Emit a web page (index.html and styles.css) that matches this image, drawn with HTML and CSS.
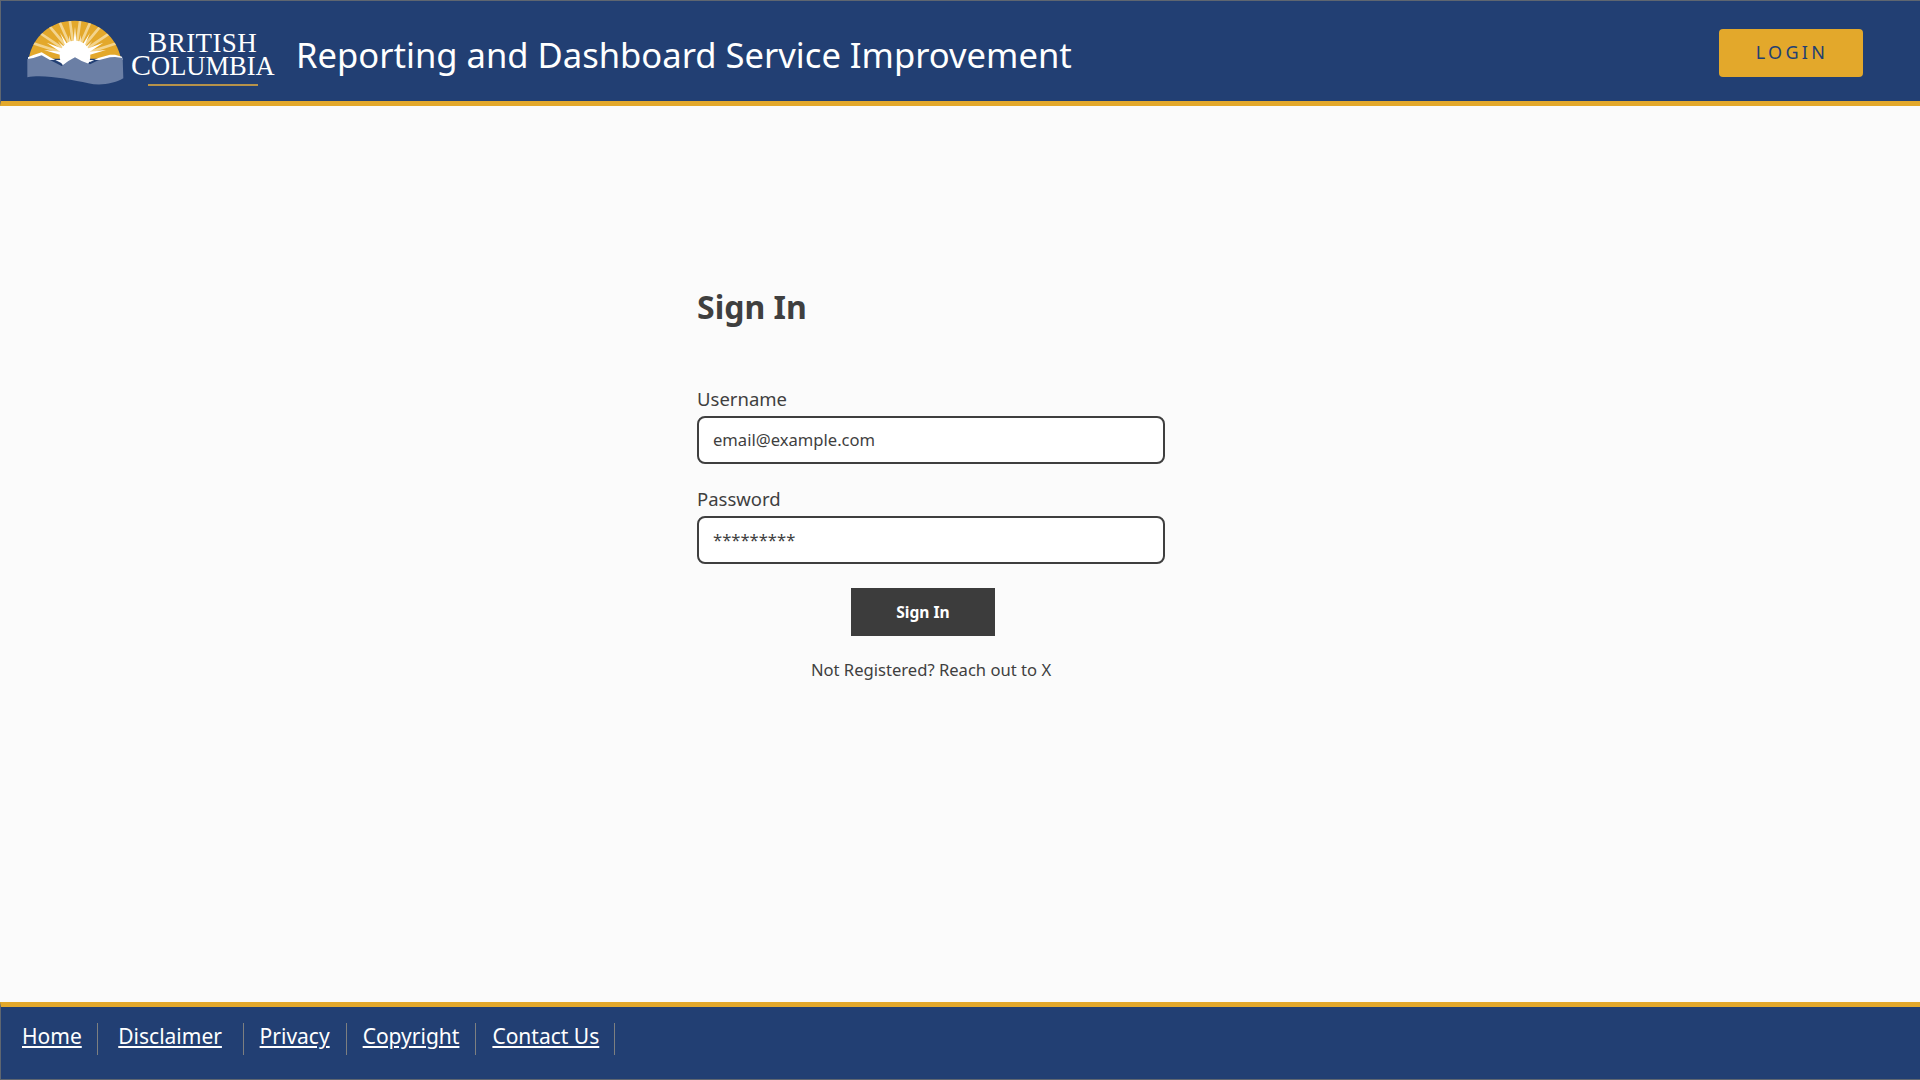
FILE: index.html
```html
<!DOCTYPE html>
<html lang="en">
<head>
  <meta charset="UTF-8" />
  <title>Reporting and Dashboard Service Improvement</title>
  <link rel="stylesheet" href="styles.css">
</head>
<body>

<header class="site-header">
  <a class="logo" href="#">
    <svg class="logo-mark" width="100" height="70" viewBox="78 54 300 210">
      <defs>
        <clipPath id="dome">
          <path d="M86 176 C98 110 150 62 224 62 C296 62 350 112 363 176 Z"/>
        </clipPath>
      </defs>
      <path d="M86 176 C98 110 150 62 224 62 C296 62 350 112 363 176 Z" fill="#e3a82b"/>
      <g clip-path="url(#dome)" stroke="#f3d48e" stroke-width="8" fill="none">
        <path d="M225 170 L249 2 M225 170 L201 2 M225 170 L294 15 M225 170 L156 15 M225 170 L334 40 M225 170 L116 40 M225 170 L366 75 M225 170 L84 75 M225 170 L387 118 M225 170 L63 118"/>
      </g>
      <g fill="#fff">
        <polygon points="225,80 217,170 233,170"/>
        <polygon points="243,105 225,170 238,170"/>
        <polygon points="207,105 225,170 212,170"/>
        <polygon points="270,98 225,170 240,170"/>
        <polygon points="180,98 225,170 210,170"/>
        <polygon points="277,123 225,170 240,170"/>
        <polygon points="173,123 225,170 210,170"/>
        <polygon points="310,128 225,160 240,175"/>
        <polygon points="140,128 225,160 210,175"/>
        <polygon points="318,150 225,160 235,175"/>
        <polygon points="132,150 225,160 215,175"/>
        <circle cx="225" cy="168" r="46"/>
      </g>
      <path d="M84 172 L100 165 L125 157 L150 172 L185 190 L205 176 L225 164 L245 176 L270 186 L295 174 L330 164 L345 164 L366 170 L368 180 L84 180 Z" fill="#fff"/>
      <path d="M82 177 L100 174 L125 166 L150 180 L185 198 L205 183 L225 172 L245 183 L270 193 L295 181 L330 172 L345 171 L368 174 L370 235 C340 252 300 258 265 250 C210 238 130 222 82 232 Z" fill="#6b7fa5"/>
    </svg>
    <span class="logo-text">
      <span class="logo-line logo-british"><span class="logo-cap">B</span>ritish</span>
      <span class="logo-line logo-columbia"><span class="logo-cap">C</span>olumbia</span>
      <span class="logo-rule"></span>
    </span>
  </a>
  <h1 class="site-title">Reporting and Dashboard Service Improvement</h1>
  <button class="login-btn">LOGIN</button>
</header>

<main class="content">
  <form class="signin-form">
    <h2>Sign In</h2>
    <div class="input-group">
      <label for="username">Username</label>
      <input type="text" id="username" placeholder="email@example.com" />
    </div>
    <div class="input-group">
      <label for="password">Password</label>
      <input type="text" id="password" placeholder="*********" />
    </div>
    <div class="button-row">
      <button type="button" class="signin-btn">Sign In</button>
    </div>
    <p class="register-note">Not Registered? Reach out to X</p>
  </form>
</main>

<footer class="site-footer">
  <ul class="footer-links">
    <li><a href="#">Home</a></li>
    <li><a href="#">Disclaimer</a></li>
    <li><a href="#">Privacy</a></li>
    <li><a href="#">Copyright</a></li>
    <li><a href="#">Contact Us</a></li>
  </ul>
</footer>

</body>
</html>
```

FILE: styles.css
```css
* {
  box-sizing: border-box;
}
body {
  margin: 0;
  height: 100vh;
  display: flex;
  flex-direction: column;
  font-family: "Noto Sans", sans-serif;
  background: #fbfbfb;
  color: #3f3f3f;
}
.site-header {
  height: 106px;
  display: flex;
  align-items: center;
  background: #223f73;
  border-top: 1px solid #5f6670;
  border-left: 1px solid #5f6670;
  border-bottom: 5px solid #e3a82b;
  padding: 0 57px 0 25px;
}
.logo {
  display: flex;
  align-items: center;
  text-decoration: none;
  color: #fff;
}
.logo-mark {
  display: block;
  margin-top: 4px;
}
.logo-text {
  display: flex;
  flex-direction: column;
  margin-left: 5px;
  margin-top: 14px;
  width: 144px;
  font-family: "Liberation Serif", serif;
  text-transform: uppercase;
  white-space: nowrap;
}
.logo-line {
  display: block;
  height: 25px;
  line-height: 25px;
}
.logo-british {
  font-size: 27px;
  padding-left: 17px;
  letter-spacing: 0.4px;
}
.logo-columbia {
  font-size: 26.5px;
  margin-top: -3px;
}
.logo-british .logo-cap {
  font-size: 29px;
}
.logo-columbia .logo-cap {
  font-size: 30px;
}
.logo-rule {
  display: block;
  width: 110px;
  height: 2px;
  margin: 7px 0 0 17px;
  background: #b6924a;
}
.site-title {
  margin: 7px 0 0 21px;
  font-size: 34.6px;
  font-weight: 400;
  color: #fff;
  flex: 1;
}
.login-btn {
  width: 144px;
  height: 48px;
  margin-top: 4px;
  padding: 0 0 2px 2px;
  background: #e3a82b;
  color: #223f73;
  border: none;
  border-radius: 4px;
  font-family: inherit;
  font-size: 18px;
  letter-spacing: 3.3px;
}
.content {
  flex: 1;
  padding-left: 697px;
}
.signin-form {
  width: 468px;
  padding-top: 179px;
}
h2 {
  margin: 0 0 58px 0;
  font-size: 32px;
  line-height: 44px;
  font-weight: 700;
}
.input-group {
  margin-bottom: 24px;
}
.input-group + .input-group {
  margin-top: -1px;
}
label {
  display: block;
  font-size: 18.5px;
  line-height: 24px;
  margin-bottom: 5px;
}
input {
  display: block;
  width: 100%;
  height: 48px;
  padding: 0 14px 2px;
  border: 2px solid #3f3f3f;
  border-radius: 8px;
  background: #fff;
  font-family: inherit;
  font-size: 16.6px;
  color: #3f3f3f;
}
input::placeholder {
  color: #3f3f3f;
  opacity: 1;
}
.button-row {
  padding-left: 154px;
}
.signin-btn {
  display: block;
  width: 144px;
  height: 48px;
  background: #3c3c3c;
  color: #fff;
  border: none;
  font-family: inherit;
  font-size: 15.6px;
  font-weight: 700;
}
.register-note {
  margin: 23px 0 0 0;
  font-size: 16.6px;
  line-height: 22px;
  text-align: center;
}
.site-footer {
  height: 78px;
  background: #223f73;
  border-top: 5px solid #e3a82b;
  border-left: 1px solid #5f6670;
  border-bottom: 1px solid #5f6670;
  padding: 16px 0 0 0;
}
.footer-links {
  display: flex;
  margin: 0;
  padding: 0;
  list-style: none;
}
.footer-links li {
  height: 32px;
  line-height: 26px;
  padding: 0 16px;
  border-right: 1px solid #7d7f80;
}
.footer-links li:first-child {
  padding-left: 21px;
  padding-right: 15.5px;
}
.footer-links li:nth-child(2) {
  padding-left: 20px;
  padding-right: 20.7px;
}
.footer-links li:last-child {
  padding-right: 15px;
}
.footer-links a {
  color: #fff;
  font-size: 21px;
}
```
